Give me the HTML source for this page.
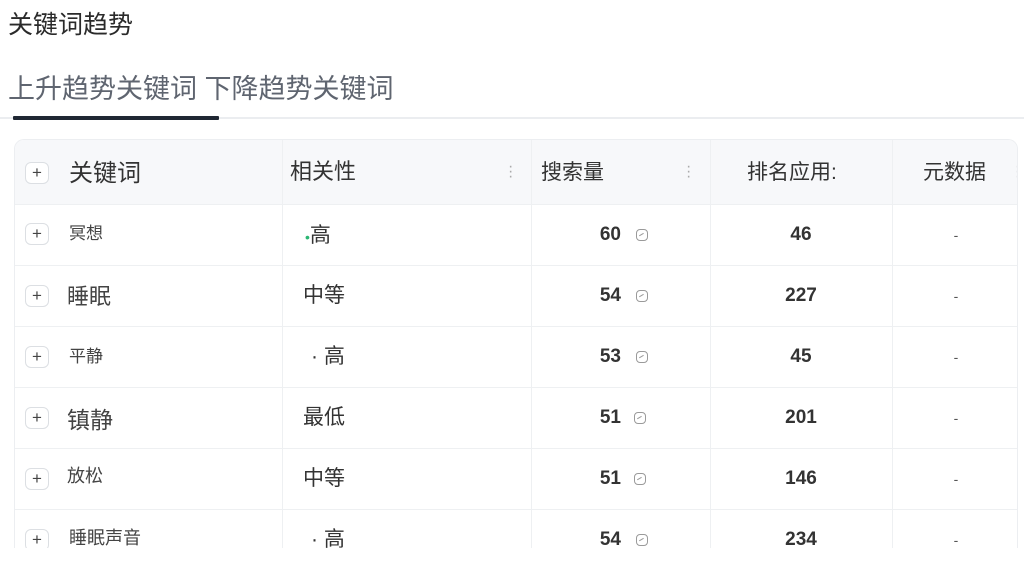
<!DOCTYPE html>
<html><head><meta charset="utf-8"><style>
*{margin:0;padding:0;box-sizing:border-box}
body{width:1024px;height:561px;background:#fff;position:relative;overflow:hidden;font-family:"Liberation Sans","Noto Sans CJK SC",sans-serif;color:#333}
.a{position:absolute;white-space:nowrap}
.t{left:8px;top:5px;font-size:25px;color:#2a2a2a}
.tabs{left:8px;top:67px;font-size:27px;letter-spacing:0;color:#5f6570}
.line{left:0;top:117px;width:1024px;height:2px;background:#ebedf0}
.ul{left:13px;top:116px;width:206px;height:4px;background:#1f2733;border-radius:1px}
.tbl{left:14px;top:139px;width:1004px;height:409px;border:1px solid #eceef1;border-bottom:none;border-radius:10px 10px 0 0;overflow:hidden}
.hdr{position:absolute;left:0;top:0;width:100%;height:64px;background:#f7f8fa}
.vl{position:absolute;top:0;width:1px;height:409px;background:#eef0f2}
.hl{position:absolute;left:0;width:100%;height:1px;background:#eef0f2}
.plus{position:absolute;width:24px;height:22px;border:1px solid #dcdfe3;border-radius:6px;font-size:17px;line-height:19px;text-align:center;color:#444;background:#fff}
.kw{position:absolute;color:#444}
.num{position:absolute;font-size:19px;font-weight:bold;color:#333;text-align:right;width:60px}
.ic{position:absolute;width:12px;height:12px;border:1.3px solid #9a9a9a;border-radius:4px}
.ic:after{content:"";position:absolute;left:2px;top:4px;width:5px;height:1.3px;background:#9a9a9a;transform:rotate(-30deg)}
.rk{position:absolute;left:696px;width:180px;text-align:center;font-size:19px;font-weight:bold;color:#333}
.dash{position:absolute;left:878px;width:126px;text-align:center;font-size:14px;color:#555}
.dots{position:absolute;color:#aaa;font-size:16px;line-height:5px;width:4px}
.hd{position:absolute;font-size:21px;color:#333;top:16px}
</style></head><body>
<div class="a t">关键词趋势</div>
<div class="a tabs">上升趋势关键词 下降趋势关键词</div>
<div class="a line"></div>
<div class="a ul"></div>
<div class="a tbl">
<div class="hdr"></div>
<div class="vl" style="left:267px"></div>
<div class="vl" style="left:516px"></div>
<div class="vl" style="left:695px"></div>
<div class="vl" style="left:877px"></div>
<div class="hl" style="top:64px"></div>
<div class="hl" style="top:125px"></div>
<div class="hl" style="top:186px"></div>
<div class="hl" style="top:247px"></div>
<div class="hl" style="top:308px"></div>
<div class="hl" style="top:369px"></div>
<div class="plus" style="left:10px;top:22px">+</div>
<div class="hd" style="left:54px;font-size:24px;top:13px">关键词</div>
<div class="hd" style="left:275px;top:14px;font-size:22px">相关性</div>
<div class="hd" style="left:526px;top:16px">搜索量</div>
<div class="hd" style="left:732px;top:16px">排名应用:</div>
<div class="hd" style="left:908px;top:16px">元数据</div>
<div class="dots" style="left:493px;top:24px">·<br>·<br>·</div>
<div class="dots" style="left:671px;top:24px">·<br>·<br>·</div>
<div class="dots" style="left:1000px;top:24px">·<br>·<br>·</div>

<div class="plus" style="left:10px;top:83px">+</div><div class="kw" style="left:54px;top:79px;font-size:17px">冥想</div>
<div class="kw" style="left:290px;top:79px;font-size:21px;color:#333"><span style="color:#2bb673;font-size:14px">•</span>高</div>
<div class="num" style="left:546px;top:84px">60</div><div class="ic" style="left:621px;top:89px"></div>
<div class="rk" style="top:84px">46</div><div class="dash" style="top:87px">-</div>

<div class="plus" style="left:10px;top:145px">+</div><div class="kw" style="left:52px;top:139px;font-size:22px">睡眠</div>
<div class="kw" style="left:288px;top:139px;font-size:21px;color:#333">中等</div>
<div class="num" style="left:546px;top:145px">54</div><div class="ic" style="left:621px;top:150px"></div>
<div class="rk" style="top:145px">227</div><div class="dash" style="top:148px">-</div>

<div class="plus" style="left:10px;top:206px">+</div><div class="kw" style="left:54px;top:202px;font-size:17px">平静</div>
<div class="kw" style="left:296px;top:200px;font-size:21px;color:#333">· 高</div>
<div class="num" style="left:546px;top:206px">53</div><div class="ic" style="left:621px;top:211px"></div>
<div class="rk" style="top:206px">45</div><div class="dash" style="top:209px">-</div>

<div class="plus" style="left:10px;top:267px">+</div><div class="kw" style="left:52px;top:261px;font-size:23px">镇静</div>
<div class="kw" style="left:288px;top:261px;font-size:21px;color:#333">最低</div>
<div class="num" style="left:546px;top:267px">51</div><div class="ic" style="left:619px;top:272px"></div>
<div class="rk" style="top:267px">201</div><div class="dash" style="top:270px">-</div>

<div class="plus" style="left:10px;top:328px">+</div><div class="kw" style="left:52px;top:322px;font-size:18px">放松</div>
<div class="kw" style="left:288px;top:322px;font-size:21px;color:#333">中等</div>
<div class="num" style="left:546px;top:328px">51</div><div class="ic" style="left:619px;top:333px"></div>
<div class="rk" style="top:328px">146</div><div class="dash" style="top:331px">-</div>

<div class="plus" style="left:10px;top:389px">+</div><div class="kw" style="left:54px;top:384px;font-size:18px">睡眠声音</div>
<div class="kw" style="left:296px;top:383px;font-size:21px;color:#333">· 高</div>
<div class="num" style="left:546px;top:389px">54</div><div class="ic" style="left:621px;top:394px"></div>
<div class="rk" style="top:389px">234</div><div class="dash" style="top:392px">-</div>
</div>
</body></html>
